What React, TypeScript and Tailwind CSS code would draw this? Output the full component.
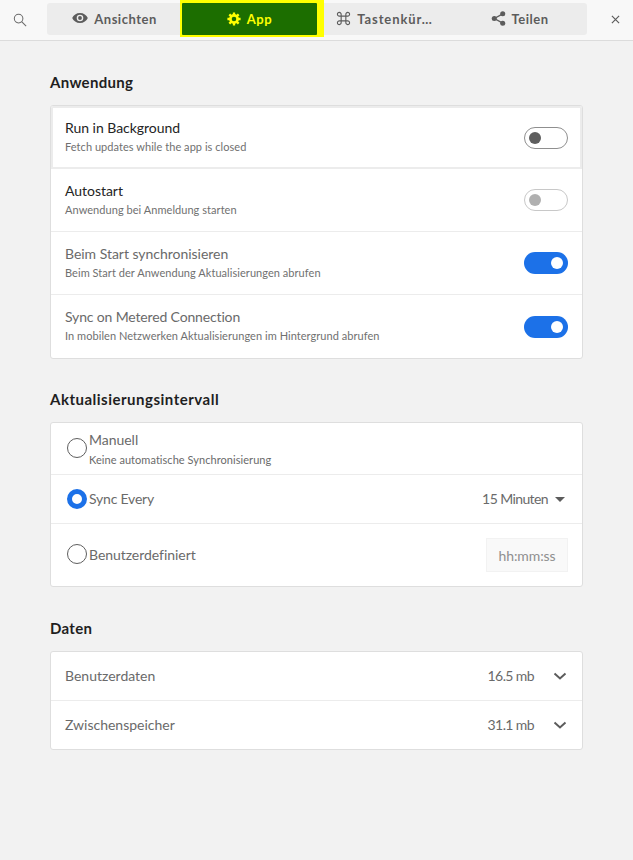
import React from "react";

const font = { fontFamily: '"Lato", "Open Sans", sans-serif' };

function Toggle({ on, dim }: { on?: boolean; dim?: boolean }) {
  if (on) {
    return (
      <div className="flex h-[22px] w-[44px] shrink-0 items-center justify-end rounded-full bg-[#1c71e8] pr-[5px]">
        <div className="h-3 w-3 rounded-full bg-white" />
      </div>
    );
  }
  return (
    <div className={`flex h-[22px] w-[44px] shrink-0 items-center rounded-full border bg-white pl-[4px] ${dim ? "border-[#c8c8c8]" : "border-[#8f8f8f]"}`}>
      <div className={`h-3 w-3 rounded-full ${dim ? "bg-[#b0b0b0]" : "bg-[#5e5e5e]"}`} />
    </div>
  );
}

function ToggleRow({ title, sub, on, dim, titleDark, focus, last, tight }: { title: string; sub: string; on?: boolean; dim?: boolean; titleDark?: boolean; focus?: boolean; last?: boolean; tight?: boolean }) {
  return (
    <div className={`flex h-[63px] items-center justify-between ${focus ? "border-2 border-[#ececec] pl-[12px] pr-[12px]" : "pl-[14px] pr-[14px]"} ${!last && !focus ? "border-b border-[#ececec]" : ""}`}>
      <div className="mb-[2px] flex flex-col">
        <span className={`text-[14px] leading-[20px] ${tight ? "tracking-[-0.15px]" : "tracking-[-0.03px]"} ${titleDark ? "text-[#242424]" : "text-[#6a6a6a]"}`}>{title}</span>
        <span className="text-[11px] leading-[17px] tracking-[0.05px] text-[#707070]">{sub}</span>
      </div>
      <Toggle on={on} dim={dim} />
    </div>
  );
}

function Radio({ on, raised }: { on?: boolean; raised?: boolean }) {
  const lift = raised ? "mb-[2px]" : "";
  if (on) return <div className={`h-5 w-5 shrink-0 rounded-full border-[5px] border-[#1c71e8] bg-white ${lift}`} />;
  return <div className={`h-5 w-5 shrink-0 rounded-full border border-[#5e5e5e] bg-white ${lift}`} />;
}

function Heading({ children, wide }: { children: React.ReactNode; wide?: boolean }) {
  return <h2 className={`mb-[12px] text-[15px] font-bold leading-[22px] text-[#1f1f1f] ${wide ? "tracking-[0.5px]" : "tracking-[0.3px]"}`}>{children}</h2>;
}

function Card({ children }: { children: React.ReactNode }) {
  return <div className="overflow-hidden rounded-[3px] border border-[#dedede] bg-white">{children}</div>;
}

function Chevron() {
  return (
    <svg width="14" height="14" viewBox="0 0 14 14" fill="none" stroke="#5c5c5c" strokeWidth="2">
      <path d="M1.500 4.500 7 9.500l5.500-5" />
    </svg>
  );
}

function DataRow({ label, value, last }: { label: string; value: string; last?: boolean }) {
  return (
    <div className={`flex items-center pl-[14px] pr-[15px] text-[14px] text-[#6a6a6a] ${last ? "h-[48px]" : "h-[49px] border-b border-[#ececec]"}`}>
      <span className="mb-[2px] flex-1">{label}</span>
      <span className="mb-[2px] mr-[19px] tracking-[-0.6px]">{value}</span>
      <Chevron />
    </div>
  );
}

function Tab({ icon, label, active, wide }: { icon: React.ReactNode; label: string; active?: boolean; wide?: boolean }) {
  return (
    <div className={`flex h-8 w-full items-center justify-center gap-[6px] text-[13px] font-bold ${wide ? "tracking-[0.9px]" : "tracking-[0.5px]"} ${active ? "text-[#ffff00]" : "text-[#5c5c5c]"}`}>
      {icon}
      <span className="mt-[1px]">{label}</span>
    </div>
  );
}

function Gear() {
  const teeth = [0, 45, 90, 135];
  return (
    <svg width="14" height="14" viewBox="0 0 14 14" fill="none" stroke="#ffff00">
      <circle cx="7" cy="7" r="3.600" strokeWidth="2.600" />
      {teeth.map((a) => (
        <path key={a} d="M7 .4v13.200" strokeWidth="2.300" transform={`rotate(${a} 7 7)`} strokeDasharray="2.600 8 2.600" />
      ))}
    </svg>
  );
}

export default function App() {
  return (
    <div className="min-h-[860px] w-[633px] bg-[#f2f2f2]" style={font}>
      <header className="flex h-[41px] items-start border-b border-[#dcdcdc] bg-[#f8f8f8]">
        <div className="flex h-[40px] w-[47px] items-center justify-center pr-[8px]">
          <svg width="14" height="14" viewBox="0 0 15 15" fill="none" stroke="#6a6a6a" strokeWidth="1.100">
            <circle cx="6" cy="6" r="4.600" />
            <path d="m9.500 9.500 4.600 4.600" />
          </svg>
        </div>
        <div className="mt-[3px] flex h-8 w-[540px] items-center rounded-[3px] bg-[#ececec]">
          <div className="flex-1">
            <Tab
              label="Ansichten"
              icon={
                <svg className="mb-[2px]" width="16" height="16" viewBox="0 0 16 16" fill="#5c5c5c">
                  <path fillRule="evenodd" d="M8 3C4.400 3 1.400 5.100.2 8c1.200 2.900 4.200 5 7.800 5s6.600-2.100 7.800-5C14.600 5.100 11.600 3 8 3Zm0 8.300A3.300 3.300 0 1 1 8 4.700a3.300 3.300 0 0 1 0 6.600Zm0-5.200a1.900 1.900 0 1 0 0 3.800 1.900 1.900 0 0 0 0-3.800Z" />
                </svg>
              }
            />
          </div>
          <div className="relative z-10 flex-1">
            <div className="absolute -bottom-[2px] -left-[2px] -right-[7px] -top-[3px] bg-[#ffff00]" />
            <div className="relative rounded-[1px] bg-[#1c6e00]">
              <Tab active label="App" icon={<span className="mb-[1px] flex"><Gear /></span>} />
            </div>
          </div>
          <div className="flex-1">
            <Tab
              wide
              label="Tastenkür…"
              icon={
                <svg className="mb-[2px]" width="15" height="15" viewBox="0 0 16 16" fill="none" stroke="#5c5c5c" strokeWidth="1.200">
                  <path d="M5.500 5.500h5v5h-5zM5.500 5.500H3.700a2 2 0 1 1 1.800-1.800zM10.500 5.500V3.700a2 2 0 1 1 1.800 1.800zM10.500 10.500h1.800a2 2 0 1 1-1.800 1.800zM5.500 10.500v1.800a2 2 0 1 1-1.800-1.800z" />
                </svg>
              }
            />
          </div>
          <div className="flex-1">
            <Tab
              label="Teilen"
              icon={
                <svg className="mb-[2px]" width="15" height="15" viewBox="0 0 16 16" fill="#5c5c5c">
                  <circle cx="12.500" cy="3" r="2.700" />
                  <circle cx="3.500" cy="8" r="2.700" />
                  <circle cx="12.500" cy="13" r="2.700" />
                  <path d="M3.500 8 12.500 3M3.500 8l9 5" stroke="#5c5c5c" strokeWidth="1.500" />
                </svg>
              }
            />
          </div>
        </div>
        <div className="flex h-[38px] flex-1 items-center justify-end pr-[13px]">
          <svg width="9" height="9" viewBox="0 0 10 10" stroke="#5c5c5c" strokeWidth="1.300">
            <path d="m1 1 8 8M9 1 1 9" />
          </svg>
        </div>
      </header>

      <main className="px-[50px] pt-[30px]">
        <Heading>Anwendung</Heading>
        <Card>
          <ToggleRow focus titleDark title="Run in Background" sub="Fetch updates while the app is closed" />
          <ToggleRow titleDark dim title="Autostart" sub="Anwendung bei Anmeldung starten" />
          <ToggleRow on title="Beim Start synchronisieren" sub="Beim Start der Anwendung Aktualisierungen abrufen" />
          <ToggleRow on last tight title="Sync on Metered Connection" sub="In mobilen Netzwerken Aktualisierungen im Hintergrund abrufen" />
        </Card>

        <div className="mt-[29px]">
          <Heading wide>Aktualisierungsintervall</Heading>
        </div>
        <Card>
          <div className="flex h-[52px] items-center gap-[2px] border-b border-[#ececec] pl-[16px]">
            <Radio raised />
            <div className="flex flex-col text-[#6a6a6a]">
              <span className="text-[14px] leading-[19px] tracking-[-0.03px]">Manuell</span>
              <span className="mt-[2px] text-[11px] leading-[17px] tracking-[0.05px]">Keine automatische Synchronisierung</span>
            </div>
          </div>
          <div className="flex h-[49px] items-center gap-[2px] border-b border-[#ececec] pl-[16px] pr-[17px] text-[14px] text-[#6a6a6a]">
            <Radio on />
            <span className="mb-[2px] flex-1 tracking-[-0.2px]">Sync Every</span>
            <span className="mb-[2px] tracking-[-0.6px]">15 Minuten</span>
            <div className="ml-[5px] h-0 w-0 border-x-[5px] border-t-[5px] border-x-transparent border-t-[#5c5c5c]" />
          </div>
          <div className="flex h-[62px] items-center gap-[2px] pl-[16px] pr-[14px] text-[14px] text-[#6a6a6a]">
            <Radio raised />
            <span className="mb-[2px] flex-1 tracking-[-0.05px]">Benutzerdefiniert</span>
            <div className="flex h-[34px] w-[82px] items-center justify-center border border-[#f2f2f2] bg-[#f9f9f9] tracking-[-0.1px] text-[#8f8f8f]">hh:mm:ss</div>
          </div>
        </Card>

        <div className="mt-[30px]">
          <Heading>Daten</Heading>
        </div>
        <Card>
          <DataRow label="Benutzerdaten" value="16.5 mb" />
          <DataRow last label="Zwischenspeicher" value="31.1 mb" />
        </Card>
      </main>
    </div>
  );
}
